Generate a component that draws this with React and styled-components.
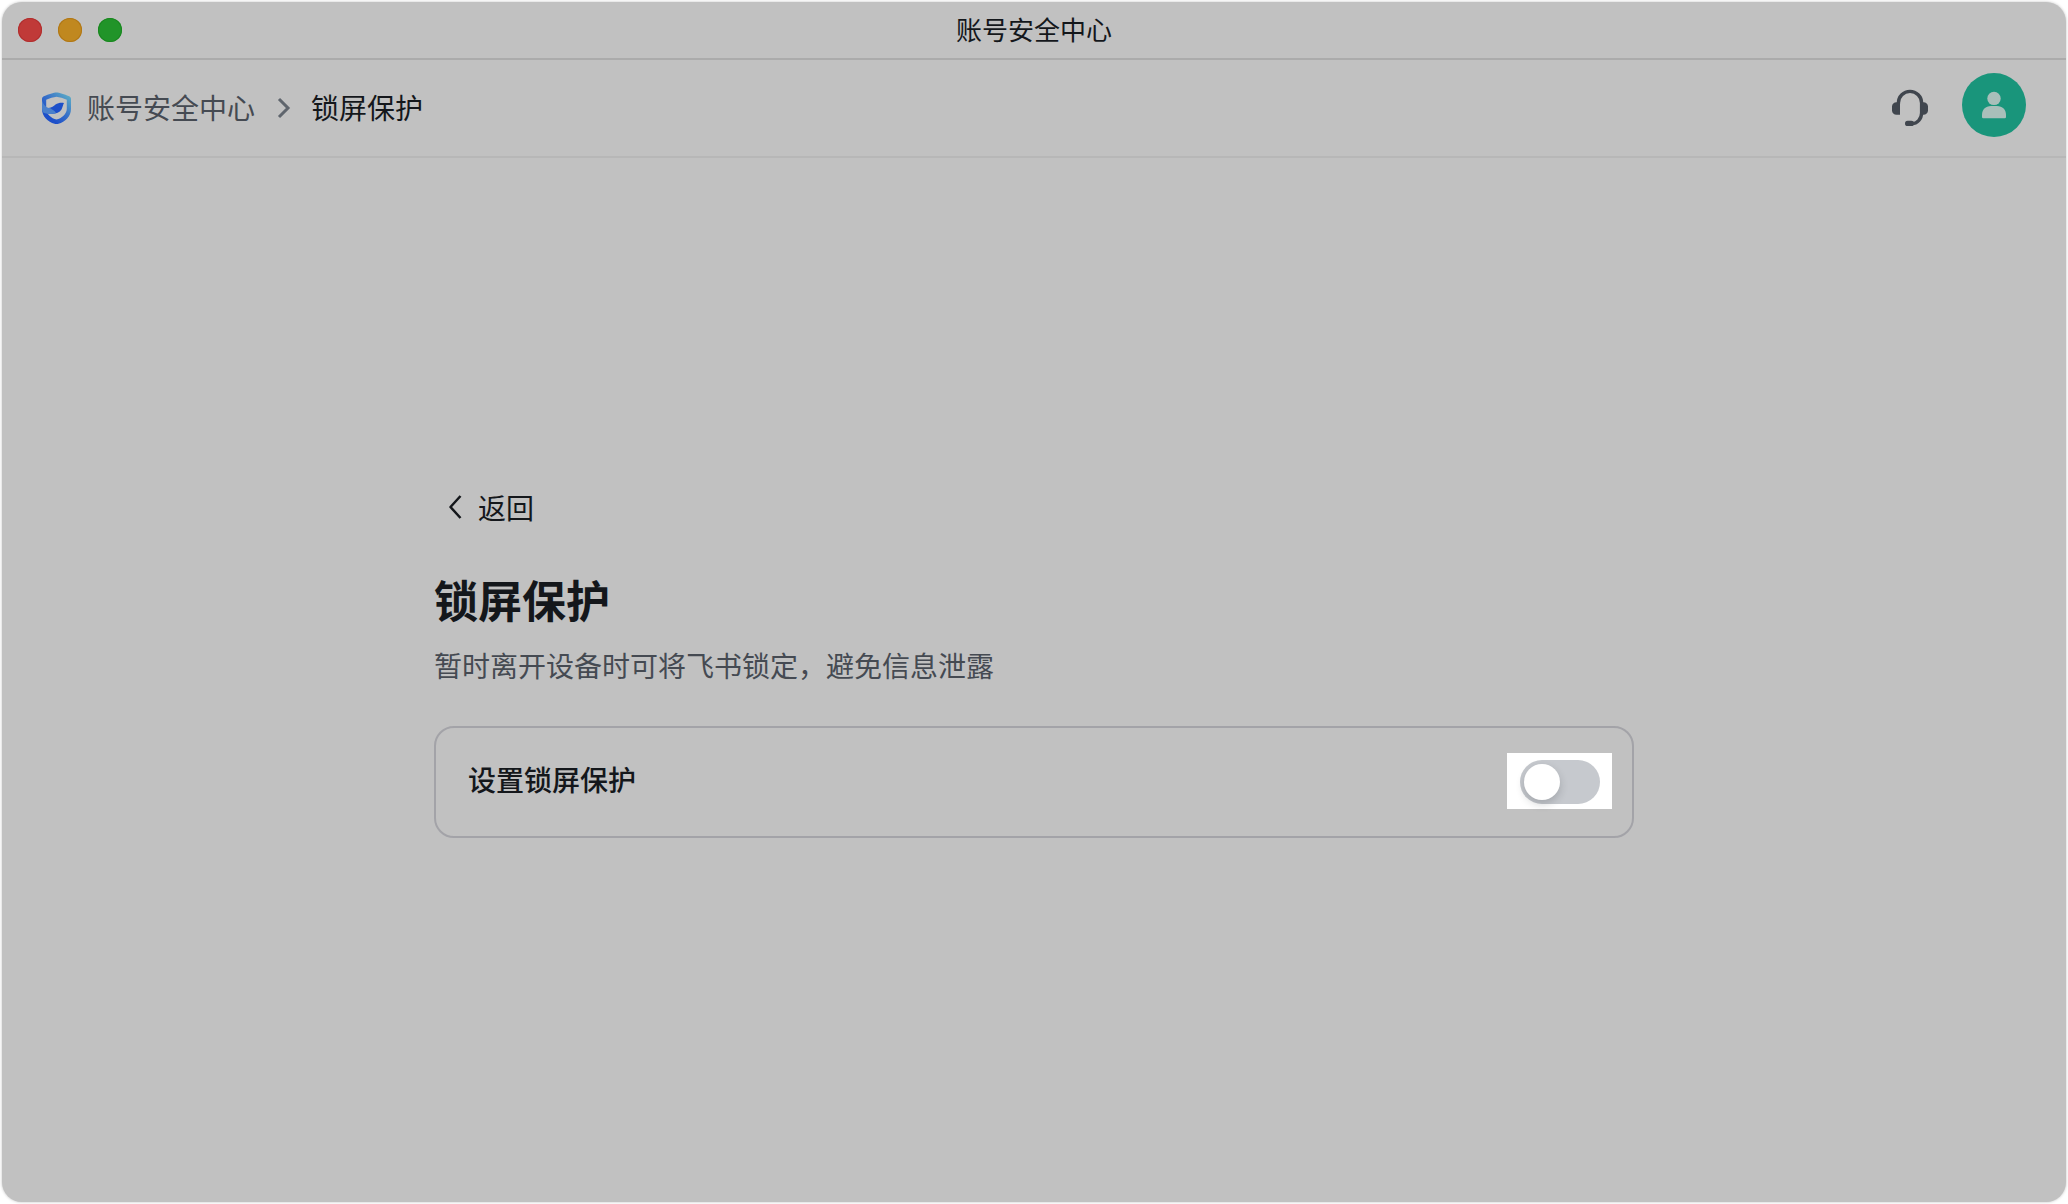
import React, { useState } from "react";
import styled, { createGlobalStyle } from "styled-components";

const GlobalStyle = createGlobalStyle`
  * {
    box-sizing: border-box;
  }

  body {
    margin: 0;
    background-color: #ffffff;
    color: #14171b;
    font-family: "Noto Sans CJK SC", "Noto Sans", sans-serif;
    font-size: 28px;
    line-height: 44px;
  }

  button {
    padding: 0;
    border: none;
    background: none;
    color: inherit;
    font: inherit;
    cursor: pointer;
  }
`;

const Window = styled.div`
  min-height: calc(100vh - 4px);
  margin: 2px;
  border-radius: 20px;
  background-color: #c1c1c1;
  box-shadow: 0 0 3px rgba(0, 0, 0, 0.25);
`;

const TitleBar = styled.div`
  display: grid;
  grid-template-columns: 1fr auto 1fr;
  align-items: center;
  height: 58px;
  padding: 0 16px;
  border-bottom: 2px solid #ababab;
`;

const Lights = styled.div`
  display: flex;
  gap: 16px;
`;

const Light = styled.button`
  width: 24px;
  height: 24px;
  border-radius: 50%;
  background-color: ${(props) => props.$color};
  box-shadow: inset 0 0 0 1px ${(props) => props.$edge};
`;

const WindowTitle = styled.span`
  padding-bottom: 2px;
  font-size: 26px;
`;

const Header = styled.header`
  display: flex;
  align-items: center;
  justify-content: space-between;
  height: 98px;
  padding: 13px 40px;
  border-bottom: 2px solid #b7b7b7;
`;

const Breadcrumb = styled.nav`
  display: flex;
  align-items: center;
`;

const Crumb = styled.a`
  display: flex;
  align-items: center;
  gap: 16px;
  color: #454a52;
  text-decoration: none;
`;

const CrumbText = styled.span`
  padding-bottom: 2px;
`;

const CrumbArrow = styled.svg`
  margin: 0 20px 0 22px;
`;

const Actions = styled.div`
  display: flex;
  align-items: center;
  align-self: stretch;
  gap: 34px;
`;

const IconButton = styled.button`
  display: flex;
`;

const Avatar = styled.button`
  display: flex;
  align-self: flex-start;
  width: 64px;
  height: 64px;
  border-radius: 50%;
  background-color: #19957b;
`;

const Main = styled.main`
  max-width: 1200px;
  margin: 0 auto;
  padding: 327px 0 40px;
`;

const BackButton = styled.button`
  display: flex;
  align-items: center;
  gap: 16px;
  padding-left: 14px;
`;

const Title = styled.h1`
  margin: 40px 0 14px;
  font-size: 44px;
  font-weight: 600;
  line-height: 60px;
`;

const Description = styled.p`
  margin: 0 0 39px;
  color: #454a52;
`;

const Card = styled.section`
  display: flex;
  align-items: center;
  justify-content: space-between;
  height: 112px;
  padding: 0 32px;
  border: 2px solid #a3a3a8;
  border-radius: 20px;
`;

const CardLabel = styled.label`
  padding-bottom: 6px;
  font-weight: 500;
`;

const Spotlight = styled.div`
  display: flex;
  margin: -7px -12px -5px -13px;
  padding: 7px 12px 5px 13px;
  background-color: #ffffff;
`;

const Switch = styled.input`
  display: flex;
  width: 80px;
  height: 44px;
  margin: 0;
  padding: 4px;
  border-radius: 22px;
  background-color: #c6c9ce;
  appearance: none;
  cursor: pointer;

  &::before {
    content: "";
    width: 36px;
    height: 36px;
    border-radius: 50%;
    background-color: #ffffff;
    box-shadow: 0 4px 8px rgba(31, 35, 41, 0.2);
  }

  &:checked {
    justify-content: flex-end;
    background-color: #3370ff;
  }
`;

const ShieldLogo = () => (
  <svg width="29" height="32" viewBox="0 0 29 32" aria-hidden="true">
    <defs>
      <linearGradient id="rim" x1="27" y1="5" x2="8" y2="25" gradientUnits="userSpaceOnUse">
        <stop offset="0" stopColor="#58a6c6" />
        <stop offset="0.5" stopColor="#3a74c8" />
        <stop offset="1" stopColor="#1d4fc9" />
      </linearGradient>
    </defs>
    <path
      fill="url(#rim)"
      fillRule="evenodd"
      d="M14.5 0.4C17 0.4 23 2.4 26.5 4C28.3 4.8 29 5.5 29 7V17C29 24.5 23 30 16.5 31.7Q14.5 32.2 12.5 31.7C6 30 0 24.5 0 17V7C0 5.5 0.7 4.8 2.5 4C6 2.4 12 0.4 14.5 0.4ZM14.5 4.8C11.5 5.2 7.5 6.3 4.2 7.8V17C4.2 22 9.5 26.5 14.5 27.6C19.5 26.5 24.8 22 24.8 17V7.8C21.5 6.3 17.5 5.2 14.5 4.8Z"
    />
    <path
      fill="#1d4fc9"
      d="M22 11C19 10.4 16 10.9 13.5 12.6C11.5 14.1 10 15.8 6.5 16L7 21.5C12 22.5 17 21.5 19.5 17.5C20.7 15.3 20.8 13 22 11Z"
    />
    <path
      fill="#4a80cb"
      d="M0 8.5C1.8 13.5 4.5 15.8 8 16.1C10.5 17.8 12.5 18.5 14 21C10 22.6 5 22.4 1.2 20.6C0.2 19 0 18 0 16Z"
    />
  </svg>
);

const HeadsetIcon = () => (
  <svg width="36" height="38" viewBox="0 0 36 38" aria-hidden="true">
    <path
      d="M6.4 15V14A11.6 11.6 0 0 1 29.6 14V24C29.6 30 25 34.6 20 34.6H17"
      fill="none"
      stroke="#40464e"
      strokeWidth="3.4"
    />
    <path
      fill="#40464e"
      d="M8 13.3V25.7H4.5C2 25.7 0 24 0 21.5V17.5C0 15 2 13.3 4.5 13.3ZM28 13.3H31.5C34 13.3 36 15 36 17.5V21.5C36 24 34 25.7 31.5 25.7H28Z"
    />
    <rect x="13" y="31.8" width="9" height="5.2" rx="2.6" fill="#40464e" />
  </svg>
);

const PersonIcon = () => (
  <svg width="64" height="64" viewBox="0 0 64 64" fill="#a9bfba" aria-hidden="true">
    <circle cx="32" cy="25.4" r="6.7" />
    <path d="M20 44V42C20 36.5 23.5 33 29 33H35C40.5 33 44 36.5 44 42V44Q44 45.3 42.7 45.3H21.3Q20 45.3 20 44Z" />
  </svg>
);

const App = () => {
  const [locked, setLocked] = useState(false);

  return (
    <>
      <GlobalStyle />
      <Window>
        <TitleBar>
          <Lights>
            <Light aria-label="关闭" $color="#c03a38" $edge="#b02e2e" />
            <Light aria-label="最小化" $color="#c0881f" $edge="#b07716" />
            <Light aria-label="最大化" $color="#219429" $edge="#19871f" />
          </Lights>
          <WindowTitle>账号安全中心</WindowTitle>
        </TitleBar>
        <Header>
          <Breadcrumb>
            <Crumb href="#">
              <ShieldLogo />
              <CrumbText>账号安全中心</CrumbText>
            </Crumb>
            <CrumbArrow width="14" height="22" viewBox="0 0 14 22" aria-hidden="true">
              <path d="M2 2L11 11L2 20" fill="none" stroke="#5f656d" strokeWidth="3" />
            </CrumbArrow>
            <CrumbText>锁屏保护</CrumbText>
          </Breadcrumb>
          <Actions>
            <IconButton aria-label="客服">
              <HeadsetIcon />
            </IconButton>
            <Avatar aria-label="个人信息">
              <PersonIcon />
            </Avatar>
          </Actions>
        </Header>
        <Main>
          <BackButton>
            <svg width="14" height="26" viewBox="0 0 14 26" aria-hidden="true">
              <path
                d="M12.5 2L2.5 13L12.5 24"
                fill="none"
                stroke="#14171b"
                strokeWidth="2.5"
                strokeLinejoin="round"
              />
            </svg>
            返回
          </BackButton>
          <Title>锁屏保护</Title>
          <Description>暂时离开设备时可将飞书锁定，避免信息泄露</Description>
          <Card>
            <CardLabel htmlFor="lock-switch">设置锁屏保护</CardLabel>
            <Spotlight>
              <Switch
                id="lock-switch"
                type="checkbox"
                role="switch"
                checked={locked}
                onChange={(e) => setLocked(e.target.checked)}
              />
            </Spotlight>
          </Card>
        </Main>
      </Window>
    </>
  );
};

export default App;
